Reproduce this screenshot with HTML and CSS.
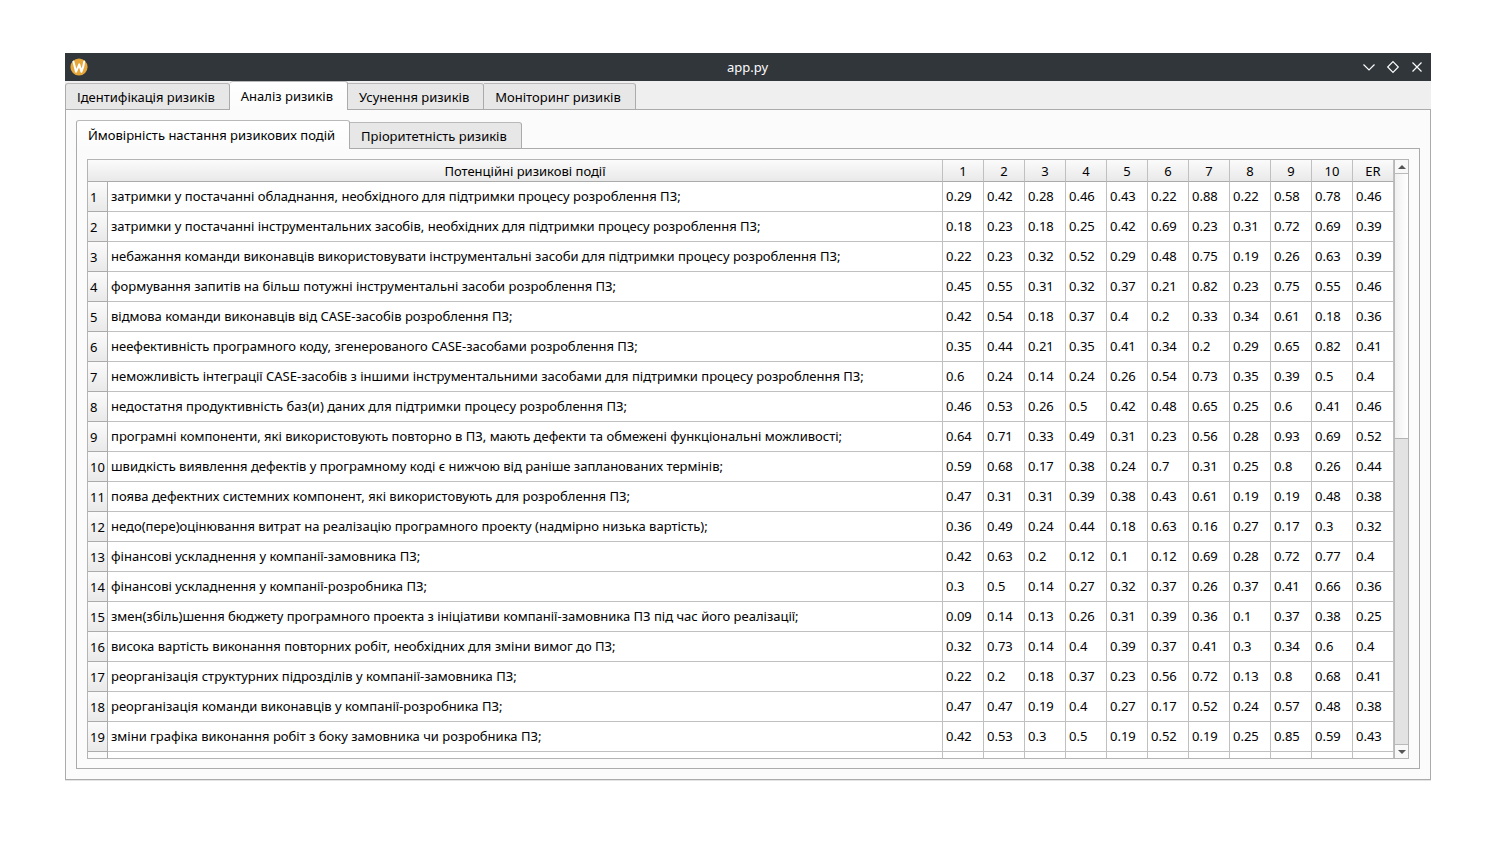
FILE: index.html
```html
<!DOCTYPE html>
<html lang="uk">
<head>
<meta charset="utf-8">
<title>app.py</title>
<link rel="stylesheet" href="styles.css">
</head>
<body>
<main class="window">
<header class="titlebar">
<svg class="logo" viewBox="0 0 18 18" aria-hidden="true"><circle cx="9" cy="9" r="8.6" fill="#e5a63a"/><path d="M3.4 3.6L6 13.8L9.3 6.4L11.4 13.8C12.8 10.5 13.8 7.5 14.2 3.6" fill="none" stroke="#fff" stroke-width="2" stroke-linejoin="round" stroke-linecap="round"/></svg>
<h1 class="title">app.py</h1>
<div class="controls">
<button class="control" type="button" aria-label="Згорнути"><svg viewBox="0 0 16 16"><path d="M2.5 5.5L8 11L13.500 5.500"/></svg></button>
<button class="control" type="button" aria-label="Розгорнути"><svg viewBox="0 0 16 16"><path d="M8 2.700L13.300 8L8 13.300L2.700 8Z"/></svg></button>
<button class="control" type="button" aria-label="Закрити"><svg viewBox="0 0 16 16"><path d="M3.500 3.500L12.500 12.500M12.500 3.500L3.500 12.500"/></svg></button>
</div>
</header>
<div class="tabs" role="tablist">
<button class="tab" type="button" role="tab" aria-selected="false">Ідентифікація ризиків</button>
<button class="tab active" type="button" role="tab" aria-selected="true">Аналіз ризиків</button>
<button class="tab" type="button" role="tab" aria-selected="false">Усунення ризиків</button>
<button class="tab" type="button" role="tab" aria-selected="false">Моніторинг ризиків</button>
</div>
<section class="pane">
<div class="tabs" role="tablist">
<button class="tab active" type="button" role="tab" aria-selected="true">Ймовірність настання ризикових подій</button>
<button class="tab" type="button" role="tab" aria-selected="false">Пріоритетність ризиків</button>
</div>
<section class="pane sheet">
<div class="view">
<div class="clip">
<table class="grid">
<colgroup><col class="num"><col><col class="val" span="11"></colgroup>
<thead><tr><td class="corner"></td><th>Потенційні ризикові події</th><th>1</th><th>2</th><th>3</th><th>4</th><th>5</th><th>6</th><th>7</th><th>8</th><th>9</th><th>10</th><th>ER</th></tr></thead>
<tbody>
<tr><th>1</th><td>затримки у постачанні обладнання, необхідного для підтримки процесу розроблення ПЗ;</td><td>0.29</td><td>0.42</td><td>0.28</td><td>0.46</td><td>0.43</td><td>0.22</td><td>0.88</td><td>0.22</td><td>0.58</td><td>0.78</td><td>0.46</td></tr>
<tr><th>2</th><td>затримки у постачанні інструментальних засобів, необхідних для підтримки процесу розроблення ПЗ;</td><td>0.18</td><td>0.23</td><td>0.18</td><td>0.25</td><td>0.42</td><td>0.69</td><td>0.23</td><td>0.31</td><td>0.72</td><td>0.69</td><td>0.39</td></tr>
<tr><th>3</th><td>небажання команди виконавців використовувати інструментальні засоби для підтримки процесу розроблення ПЗ;</td><td>0.22</td><td>0.23</td><td>0.32</td><td>0.52</td><td>0.29</td><td>0.48</td><td>0.75</td><td>0.19</td><td>0.26</td><td>0.63</td><td>0.39</td></tr>
<tr><th>4</th><td>формування запитів на більш потужні інструментальні засоби розроблення ПЗ;</td><td>0.45</td><td>0.55</td><td>0.31</td><td>0.32</td><td>0.37</td><td>0.21</td><td>0.82</td><td>0.23</td><td>0.75</td><td>0.55</td><td>0.46</td></tr>
<tr><th>5</th><td>відмова команди виконавців від CASE-засобів розроблення ПЗ;</td><td>0.42</td><td>0.54</td><td>0.18</td><td>0.37</td><td>0.4</td><td>0.2</td><td>0.33</td><td>0.34</td><td>0.61</td><td>0.18</td><td>0.36</td></tr>
<tr><th>6</th><td>неефективність програмного коду, згенерованого CASE-засобами розроблення ПЗ;</td><td>0.35</td><td>0.44</td><td>0.21</td><td>0.35</td><td>0.41</td><td>0.34</td><td>0.2</td><td>0.29</td><td>0.65</td><td>0.82</td><td>0.41</td></tr>
<tr><th>7</th><td>неможливість інтеграції CASE-засобів з іншими інструментальними засобами для підтримки процесу розроблення ПЗ;</td><td>0.6</td><td>0.24</td><td>0.14</td><td>0.24</td><td>0.26</td><td>0.54</td><td>0.73</td><td>0.35</td><td>0.39</td><td>0.5</td><td>0.4</td></tr>
<tr><th>8</th><td>недостатня продуктивність баз(и) даних для підтримки процесу розроблення ПЗ;</td><td>0.46</td><td>0.53</td><td>0.26</td><td>0.5</td><td>0.42</td><td>0.48</td><td>0.65</td><td>0.25</td><td>0.6</td><td>0.41</td><td>0.46</td></tr>
<tr><th>9</th><td>програмні компоненти, які використовують повторно в ПЗ, мають дефекти та обмежені функціональні можливості;</td><td>0.64</td><td>0.71</td><td>0.33</td><td>0.49</td><td>0.31</td><td>0.23</td><td>0.56</td><td>0.28</td><td>0.93</td><td>0.69</td><td>0.52</td></tr>
<tr><th>10</th><td>швидкість виявлення дефектів у програмному коді є нижчою від раніше запланованих термінів;</td><td>0.59</td><td>0.68</td><td>0.17</td><td>0.38</td><td>0.24</td><td>0.7</td><td>0.31</td><td>0.25</td><td>0.8</td><td>0.26</td><td>0.44</td></tr>
<tr><th>11</th><td>поява дефектних системних компонент, які використовують для розроблення ПЗ;</td><td>0.47</td><td>0.31</td><td>0.31</td><td>0.39</td><td>0.38</td><td>0.43</td><td>0.61</td><td>0.19</td><td>0.19</td><td>0.48</td><td>0.38</td></tr>
<tr><th>12</th><td>недо(пере)оцінювання витрат на реалізацію програмного проекту (надмірно низька вартість);</td><td>0.36</td><td>0.49</td><td>0.24</td><td>0.44</td><td>0.18</td><td>0.63</td><td>0.16</td><td>0.27</td><td>0.17</td><td>0.3</td><td>0.32</td></tr>
<tr><th>13</th><td>фінансові ускладнення у компанії-замовника ПЗ;</td><td>0.42</td><td>0.63</td><td>0.2</td><td>0.12</td><td>0.1</td><td>0.12</td><td>0.69</td><td>0.28</td><td>0.72</td><td>0.77</td><td>0.4</td></tr>
<tr><th>14</th><td>фінансові ускладнення у компанії-розробника ПЗ;</td><td>0.3</td><td>0.5</td><td>0.14</td><td>0.27</td><td>0.32</td><td>0.37</td><td>0.26</td><td>0.37</td><td>0.41</td><td>0.66</td><td>0.36</td></tr>
<tr><th>15</th><td>змен(збіль)шення бюджету програмного проекта з ініціативи компанії-замовника ПЗ під час його реалізації;</td><td>0.09</td><td>0.14</td><td>0.13</td><td>0.26</td><td>0.31</td><td>0.39</td><td>0.36</td><td>0.1</td><td>0.37</td><td>0.38</td><td>0.25</td></tr>
<tr><th>16</th><td>висока вартість виконання повторних робіт, необхідних для зміни вимог до ПЗ;</td><td>0.32</td><td>0.73</td><td>0.14</td><td>0.4</td><td>0.39</td><td>0.37</td><td>0.41</td><td>0.3</td><td>0.34</td><td>0.6</td><td>0.4</td></tr>
<tr><th>17</th><td>реорганізація структурних підрозділів у компанії-замовника ПЗ;</td><td>0.22</td><td>0.2</td><td>0.18</td><td>0.37</td><td>0.23</td><td>0.56</td><td>0.72</td><td>0.13</td><td>0.8</td><td>0.68</td><td>0.41</td></tr>
<tr><th>18</th><td>реорганізація команди виконавців у компанії-розробника ПЗ;</td><td>0.47</td><td>0.47</td><td>0.19</td><td>0.4</td><td>0.27</td><td>0.17</td><td>0.52</td><td>0.24</td><td>0.57</td><td>0.48</td><td>0.38</td></tr>
<tr><th>19</th><td>зміни графіка виконання робіт з боку замовника чи розробника ПЗ;</td><td>0.42</td><td>0.53</td><td>0.3</td><td>0.5</td><td>0.19</td><td>0.52</td><td>0.19</td><td>0.25</td><td>0.85</td><td>0.59</td><td>0.43</td></tr>
<tr><th></th><td></td><td></td><td></td><td></td><td></td><td></td><td></td><td></td><td></td><td></td><td></td><td></td></tr>
</tbody>
</table>
</div>
<div class="scrollbar">
<button class="step up" type="button" aria-label="Вгору"><svg viewBox="0 0 8 4"><path d="M0 4L4 0L8 4Z"/></svg></button>
<div class="track"><div class="thumb"></div></div>
<button class="step down" type="button" aria-label="Вниз"><svg viewBox="0 0 8 4"><path d="M0 0L4 4L8 0Z"/></svg></button>
</div>
</div>
</section>
</section>
</main>
</body>
</html>
```

FILE: styles.css
```css
* {
  box-sizing: border-box;
}

body {
  margin: 0;
  height: 100vh;
  padding: 53px 65px 78px;
  display: flex;
  background: #fff;
  color: #000;
  font: 13px/18px "Noto Sans", sans-serif;
}

button {
  font: inherit;
  color: inherit;
  margin: 0;
}

.window {
  flex: 1;
  min-width: 0;
  display: flex;
  flex-direction: column;
  background: #efefef;
  box-shadow: 0 1px 0 #e4e4e4;
}

.titlebar {
  flex: none;
  height: 28px;
  padding: 0 6px 0 5px;
  display: grid;
  grid-template-columns: 1fr auto 1fr;
  align-items: center;
  background: #31363b;
  color: #fcfcfc;
}

.logo {
  width: 18px;
  height: 18px;
}

.title {
  margin: 0;
  font-size: 13px;
  font-weight: 400;
}

.controls {
  display: flex;
  justify-content: flex-end;
  gap: 8px;
}

.control {
  display: flex;
  padding: 0;
  border: 0;
  background: none;
}

.control svg {
  width: 16px;
  height: 16px;
  fill: none;
  stroke: #fcfcfc;
  stroke-width: 1.2;
}

.tabs {
  position: relative;
  flex: none;
  display: flex;
  align-items: flex-end;
  height: 29px;
  margin-bottom: -1px;
}

.tab {
  height: 27px;
  padding: 0 14px 0 11px;
  border: 1px solid #ababab;
  border-top-color: #b9b9b9;
  border-left-width: 0;
  border-radius: 0 3px 0 0;
  background: #e7e7e7;
  white-space: nowrap;
}

.tab:first-child {
  border-left-width: 1px;
  border-radius: 3px 3px 0 0;
}

.tab.active {
  height: 29px;
  padding-bottom: 1px;
  border-bottom: 0;
  border-radius: 3px 3px 0 0;
  background: linear-gradient(#fff, #fbfbfb);
}

.pane {
  flex: 1;
  min-height: 0;
  display: flex;
  flex-direction: column;
  padding: 10px;
  border: 1px solid #ababab;
  background: #fbfbfb;
}

.sheet {
  padding-bottom: 9px;
}

.view {
  flex: 1;
  min-height: 0;
  display: flex;
  border: 1px solid #b4b4b4;
  background: #fff;
}

.clip {
  flex: 1;
  min-width: 0;
  overflow: hidden;
}

.grid {
  width: 100%;
  table-layout: fixed;
  border-spacing: 0;
}

.num {
  width: 20px;
}

.val {
  width: 41px;
}

.grid th,
.grid td {
  height: 30px;
  padding: 0 3px 2px;
  border: 0 solid #c0c0c0;
  border-width: 0 1px 1px 0;
  font-weight: 400;
  text-align: left;
  white-space: nowrap;
}

.grid thead th,
.grid thead td {
  height: 22px;
  padding: 0;
  border-bottom-color: #ababab;
  background: linear-gradient(#fbfbfb, #e9e9e9);
  text-align: center;
}

.grid thead .corner {
  border-right: 0;
}

.grid tbody th {
  padding: 0 0 0 2px;
  border-color: #ababab;
  background: linear-gradient(#fbfbfb, #e9e9e9);
}

.grid tr:last-child th:empty {
  background: #fafafa;
}

.scrollbar {
  flex: none;
  width: 14px;
  display: flex;
  flex-direction: column;
  border-left: 1px solid #b9b9b9;
  background: #e3e3e3;
}

.step {
  flex: none;
  height: 14px;
  padding: 0;
  display: flex;
  align-items: center;
  justify-content: center;
  border: 0 solid #b9b9b9;
  background: #f8f8f8;
}

.step svg {
  width: 8px;
  height: 4px;
  fill: #555;
}

.up {
  border-bottom-width: 1px;
}

.down {
  border-top-width: 1px;
}

.track {
  flex: 1;
}

.thumb {
  height: 46.5%;
  border-bottom: 1px solid #b4b4b4;
  background: linear-gradient(to right, #f0f0f0, #fff);
}
```
